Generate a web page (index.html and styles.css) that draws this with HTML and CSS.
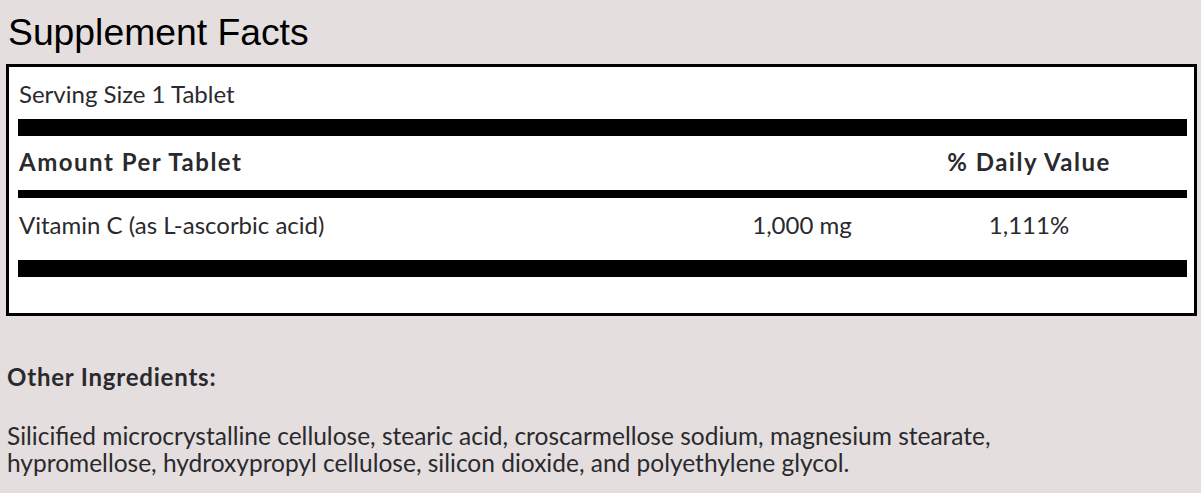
FILE: index.html
```html
<!DOCTYPE html>
<html lang="en">
<head>
<meta charset="utf-8">
<title>Supplement Facts</title>
<link rel="stylesheet" href="styles.css">
</head>
<body>
<h2 class="title">Supplement Facts</h2>
<div class="facts">
  <div class="serving">Serving Size 1 Tablet</div>
  <div class="bar bar-thick"></div>
  <div class="row head">
    <span class="name">Amount Per Tablet</span>
    <span class="amt"></span>
    <span class="dv">% Daily Value</span>
  </div>
  <div class="bar bar-thin"></div>
  <div class="row item">
    <span class="name">Vitamin C (as L-ascorbic acid)</span>
    <span class="amt">1,000 mg</span>
    <span class="dv">1,111%</span>
  </div>
  <div class="bar bar-thick"></div>
</div>
<h3 class="other-title">Other Ingredients:</h3>
<p class="other-text">Silicified microcrystalline cellulose, stearic acid, croscarmellose sodium, magnesium stearate,<br>hypromellose, hydroxypropyl cellulose, silicon dioxide, and polyethylene glycol.</p>
</body>
</html>
```
FILE: styles.css
```css
html, body {
  margin: 0;
  padding: 0;
}
body {
  background: #e4dede;
  font-family: "Lato", "Liberation Sans", sans-serif;
  color: #2a2a2e;
  padding: 0 4px 0 6px;
}
.title {
  margin: 0;
  padding: 11px 0 0 2px;
  height: 53px;
  box-sizing: border-box;
  font-family: "Liberation Sans", Arial, sans-serif;
  font-weight: normal;
  font-size: 37.3px;
  line-height: 42px;
  color: #000;
}
.facts {
  background: #fff;
  border: 3px solid #000;
  padding: 0 7px 0 9px;
  height: 252px;
  box-sizing: border-box;
  margin-top: 11px;
}
.serving {
  font-size: 24px;
  line-height: 30px;
  padding: 12px 0 10px 1px;
}
.bar { background: #000; }
.bar-thick { height: 17px; }
.bar-thin { height: 8px; }
.row {
  display: grid;
  grid-template-columns: 1fr 254px 200px 58px;
  font-size: 24px;
  line-height: 30px;
  padding-left: 1px;
}
.row.head {
  font-weight: bold;
  letter-spacing: 1.5px;
  padding: 11px 0 13px 1px;
}
.row.item {
  padding: 12px 0 20px 1px;
}
.amt, .dv { text-align: center; }
.other-title {
  margin: 0;
  padding: 46px 0 0 1px;
  font-size: 24px;
  line-height: 30px;
  font-weight: bold;
  letter-spacing: 0.8px;
}
.other-text {
  margin: 30px 0 0 1px;
  font-size: 24.5px;
  line-height: 27px;
}
```
